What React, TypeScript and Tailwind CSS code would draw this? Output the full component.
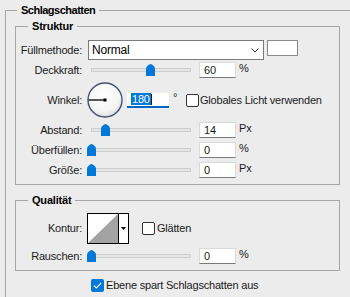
import { FC, ReactNode } from "react";

const LABEL = "w-[66px] shrink-0 text-right";
const LINE = "border-[#a6a6a6]";

// group box with the title sitting on the top border
const GroupBox: FC<{ title: string; lead: string; className?: string; bodyClass?: string; children: ReactNode }> = ({
  title,
  lead,
  className,
  bodyClass,
  children,
}) => (
  <div className={className}>
    <div className="flex h-[14px]">
      <div className={`mt-[7px] shrink-0 border-l border-t ${LINE} ${lead}`} />
      <div className="px-[4px] font-bold leading-[14px] text-black">{title}</div>
      <div className={`mt-[7px] flex-1 border-r border-t ${LINE}`} />
    </div>
    <div className={`border-x border-b ${LINE} ${bodyClass ?? ""}`}>{children}</div>
  </div>
);

const Slider: FC<{ value: number }> = ({ value }) => (
  <div className="relative ml-[5px] h-[16px] w-[108px] shrink-0">
    <div className="absolute left-[4px] top-[6px] h-[4px] w-[100px] border border-[#cdcdcd] bg-[#e6e6e6]" />
    <svg
      className="absolute top-[2px]"
      style={{ left: Math.round(value * 0.98) }}
      width="9"
      height="12"
      viewBox="0 0 9 12"
    >
      <path d="M0 4.5 Q0.5 1.5 4.5 0 Q8.5 1.5 9 4.5 V12 H0 Z" fill="#0078d7" />
    </svg>
  </div>
);

const NumInput: FC<{ value: string; unit: string }> = ({ value, unit }) => (
  <>
    <div className="ml-[4px] flex h-[16px] w-[37px] shrink-0 items-center border border-[#dadada] border-b-[#7a7a7a] bg-white pl-[4px] leading-none">
      {value}
    </div>
    <span className="ml-[3px] self-start leading-[12px]">{unit}</span>
  </>
);

const SliderRow: FC<{ label: string; value: number; text: string; unit: string; className?: string }> = ({
  label,
  value,
  text,
  unit,
  className,
}) => (
  <div className={`flex h-[16px] items-center ${className ?? ""}`}>
    <div className={LABEL}>{label}</div>
    <Slider value={value} />
    <NumInput value={text} unit={unit} />
  </div>
);

const Checkbox: FC<{ checked?: boolean }> = ({ checked }) =>
  checked ? (
    <div className="flex h-[13px] w-[13px] shrink-0 items-center justify-center rounded-[2px] bg-[#0078d7]">
      <svg width="9" height="7" viewBox="0 0 9 7">
        <path d="M0.8 3.6 L3.3 6 L8.2 0.8" stroke="white" strokeWidth="1.2" fill="none" />
      </svg>
    </div>
  ) : (
    <div className="h-[13px] w-[13px] shrink-0 rounded-[2px] border border-[#333333] bg-white" />
  );

const Dial = () => (
  <svg className="ml-[5px] shrink-0" width="36" height="36" viewBox="0 0 36 36">
    <defs>
      <radialGradient id="dialFill" cx="0.45" cy="0.35" r="0.7">
        <stop offset="0" stopColor="#ffffff" />
        <stop offset="0.7" stopColor="#f4f4f4" />
        <stop offset="1" stopColor="#d6d6d6" />
      </radialGradient>
    </defs>
    <circle cx="18" cy="18" r="17" fill="url(#dialFill)" stroke="#46526f" strokeWidth="1.4" />
    <line x1="1.5" y1="18" x2="18" y2="18" stroke="#000" strokeWidth="1.3" />
    <rect x="16.5" y="16.5" width="3" height="3" fill="#000" />
  </svg>
);

export default function App() {
  return (
    <div className="h-[297px] w-[350px] overflow-hidden bg-[#ececec] pl-[5px] pt-[3px] font-['Liberation_Sans',Arial,sans-serif] text-[11px] tracking-[-0.2px] text-[#1a1a1a]">
      <div className="w-[360px]">
        <div className="flex h-[14px]">
          <div className={`mt-[7px] w-[12px] shrink-0 border-l border-t ${LINE}`} />
          <div className="px-[4px] font-bold leading-[14px] tracking-[-0.5px] text-black">Schlagschatten</div>
          <div className={`mt-[7px] flex-1 border-t ${LINE}`} />
        </div>

        <div className={`h-[300px] border-l ${LINE} pt-[2px]`}>
          <GroupBox title="Struktur" lead="w-[13px]" className="ml-[9px] w-[325px]" bodyClass="pb-[6px] pt-[7px]">
            <div className="flex h-[20px] items-center">
              <div className={LABEL}>Füllmethode:</div>
              <div className="ml-[6px] flex h-[20px] w-[176px] shrink-0 items-center justify-between border border-[#7a7a7a] bg-white pl-[3px] pr-[4px]">
                <span className="text-[12px] text-black">Normal</span>
                <svg width="8" height="5" viewBox="0 0 8 5">
                  <path d="M0.5 0.5 L4 4 L7.5 0.5" stroke="#333" strokeWidth="1" fill="none" />
                </svg>
              </div>
              <div className="ml-[3px] h-[16px] w-[31px] self-start border border-[#8a8a8a] bg-white" />
            </div>

            <SliderRow className="mt-[2px]" label="Deckkraft:" value={60} text="60" unit="%" />

            <div className="mt-[4px] flex h-[36px] items-center">
              <div className={LABEL}>Winkel:</div>
              <Dial />
              <div className="ml-[4px] flex h-[15px] w-[42px] shrink-0 items-center border-b-2 border-[#0067c0] bg-white pl-[4px]">
                <span className="bg-[#0078d7] px-[1px] leading-[12px] text-white">180</span>
                <span className="h-[11px] w-px bg-[#1a1a1a]" />
              </div>
              <span className="ml-[4px] w-[13px] self-start pt-[9px] leading-[12px]">°</span>
              <Checkbox />
              <span className="ml-[1px]">Globales Licht verwenden</span>
            </div>

            <SliderRow className="mt-[4px]" label="Abstand:" value={14} text="14" unit="Px" />
            <SliderRow className="mt-[4px]" label="Überfüllen:" value={0} text="0" unit="%" />
            <SliderRow className="mt-[4px]" label="Größe:" value={0} text="0" unit="Px" />
          </GroupBox>

          <GroupBox title="Qualität" lead="w-[13px]" className="ml-[9px] mt-[8px] w-[325px]" bodyClass="pb-[6px] pt-[6px]">
            <div className="flex h-[31px] items-center">
              <div className={LABEL}>Kontur:</div>
              <div className="ml-[5px] flex h-[31px] w-[42px] shrink-0 border border-black bg-white">
                <svg width="30" height="29" viewBox="0 0 30 29" className="shrink-0">
                  <path d="M0 29 L30 0 V29 Z" fill="#a3a3a3" />
                </svg>
                <div className="flex flex-1 items-center justify-center border-l border-black">
                  <svg width="5" height="3" viewBox="0 0 5 3">
                    <path d="M0 0 H5 L2.5 3 Z" fill="#000" />
                  </svg>
                </div>
              </div>
              <div className="ml-[13px]">
                <Checkbox />
              </div>
              <span className="ml-[2px]">Glätten</span>
            </div>

            <SliderRow className="mt-[4px]" label="Rauschen:" value={0} text="0" unit="%" />
          </GroupBox>

          <div className="ml-[85px] mt-[6px] flex items-center">
            <Checkbox checked />
            <span className="ml-[2px]">Ebene spart Schlagschatten aus</span>
          </div>
        </div>
      </div>
    </div>
  );
}
